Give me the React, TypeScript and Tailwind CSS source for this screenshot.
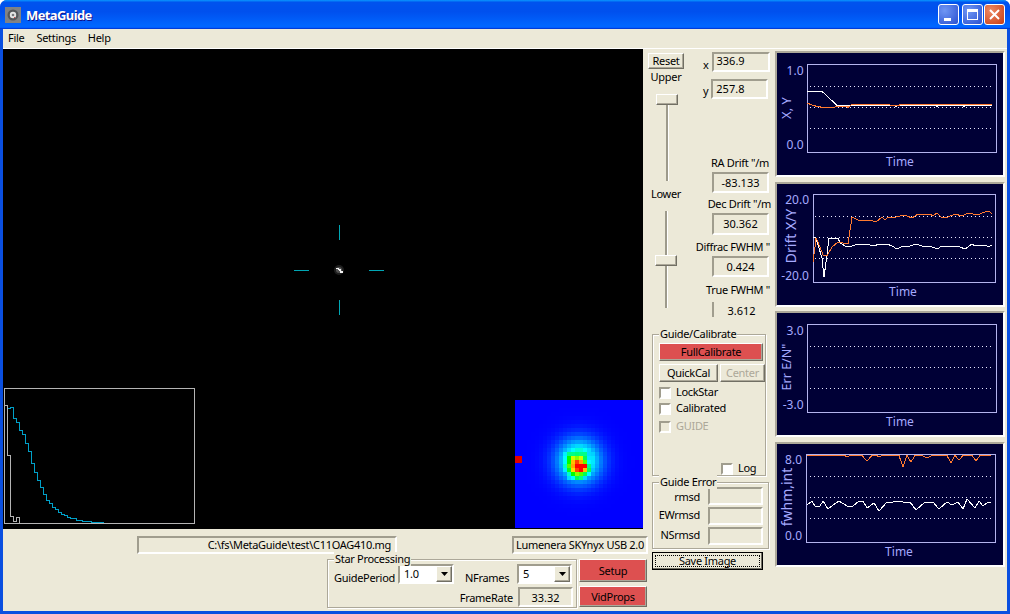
import type { ReactNode } from 'react';

const raised = 'border border-t-white border-l-white border-r-[#716f64] border-b-[#716f64] shadow-[inset_-1px_-1px_0_#aca899]';
const sunken = 'border-2 border-t-[#a09d8e] border-l-[#a09d8e] border-r-white border-b-white';
const etched = 'relative border border-[#aca899] shadow-[1px_1px_0_#fff,inset_1px_1px_0_#fff]';

// points are in window pixels, each svg gets a viewBox in the same coordinates
const charts = [
  {
    top: 'mt-[2px]',
    h: 122,
    y0: 53,
    plot: [807.5, 64.5, 189, 88],
    dots: [86.5, 107.5, 128.5],
    dotX: 810,
    yLabel: 'X, Y',
    yLabelSize: 13,
    yLabelX: 791,
    yLabelY: 108,
    max: '1.0',
    min: '0.0',
    tickX: 803.5,
    maxY: 75,
    minY: 149,
    timeX: 900,
    timeY: 166,
    white: '807,91.5 822,91.5 825,94 837,105.5 850,105.5 895,105.5 896,106.5 897,105.5 936,105.5 937,106.5 938,105.5 963,105.5 964,106.5 965,105.5 992,105.5',
    orange: '807,103 813,105.5 823,107.5 833,107.5 837,106.5 847,106 848,107.5 851,105 853,104.5 880,105 881,104.5 890,105 899,105.5 900,104.5 992,104.5',
  },
  {
    top: 'mt-[5px]',
    h: 121,
    y0: 184,
    plot: [813.5, 194.5, 182, 88],
    dots: [216.5, 237.5, 258.5],
    dotX: 815,
    yLabel: 'Drift X/Y',
    yLabelSize: 14,
    yLabelX: 796,
    yLabelY: 236,
    max: '20.0',
    min: '-20.0',
    tickX: 809,
    maxY: 204,
    minY: 280,
    timeX: 903,
    timeY: 296,
    white: '813,237 816,238 818,245 822,258 824,277 827,255 829,238 838,238 840,243 847,247 852,246 858,244 867,244 873,246 880,244 887,244 892,246 897,249 903,246 910,246 916,244 922,246 930,246 937,249 942,246 947,247 953,246 960,247 965,249 972,244 975,246 980,245 987,246 988,247 992,245',
    orange: '813,262 815,247 816,238 818,242 823,255 827,256 832,247 838,242 848,244 852,217 858,220 870,220 876,222 882,217 885,220 888,217 893,218 903,215 907,216 912,218 918,214 930,214 933,216 937,213 941,217 948,217 955,214 962,216 968,213 973,214 980,214 987,211 990,212 992,214',
  },
  {
    top: 'mt-[4px]',
    h: 122,
    y0: 313,
    plot: [807.5, 324.5, 189, 88],
    dots: [346.5, 367.5, 388.5],
    dotX: 810,
    yLabel: 'Err E/N"',
    yLabelSize: 12.5,
    yLabelX: 791,
    yLabelY: 367,
    max: '3.0',
    min: '-3.0',
    tickX: 803.5,
    maxY: 335,
    minY: 409,
    timeX: 900,
    timeY: 426,
    white: '',
    orange: '',
  },
  {
    top: 'mt-[5px]',
    h: 121,
    y0: 444,
    plot: [806.5, 454.5, 189, 88],
    dots: [476.5, 497.5, 518.5],
    dotX: 810,
    yLabel: 'fwhm,int',
    yLabelSize: 14,
    yLabelX: 792,
    yLabelY: 497,
    max: '8.0',
    min: '0.0',
    tickX: 802,
    maxY: 464,
    minY: 540,
    timeX: 899,
    timeY: 556,
    white: '807,505 812,501 815,506 820,506 823,501 828,509 833,505 839,501 847,506 853,506 859,501 863,501 867,508 874,503 879,511 887,502 893,502 898,501 903,502 910,502 916,510 925,502 933,502 939,509 947,502 952,505 958,502 963,509 967,499 975,508 979,501 983,506 988,502 991,503',
    orange: '807,455.5 845,455.5 847,457 850,455.5 862,455.5 867,461 872,455.5 877,455.5 879,457 882,455.5 899,455.5 903,467 907,455.5 911,462 915,455.5 922,455.5 927,458 932,455.5 947,455.5 951,463 955,455.5 959,460 963,455.5 972,455.5 976,461 980,455.5 991,455.5',
  },
];

const grayHist = '4.5,405.5 7.5,405.5 7.5,455.5 10.5,455.5 10.5,516.5 13.5,516.5 13.5,521.5 16.5,521.5 16.5,517.5 19.5,517.5 19.5,523.5';
const cyanHist = '7.5,408.5 10.5,408.5 10.5,407.5 13.5,407.5 13.5,418.5 16.5,418.5 16.5,422.5 19.5,422.5 19.5,430.5 22.5,430.5 22.5,434.5 25.5,434.5 25.5,443.5 28.5,443.5 28.5,451.5 31.5,451.5 31.5,463.5 34.5,463.5 34.5,472.5 37.5,472.5 37.5,480.5 40.5,480.5 40.5,487.5 43.5,487.5 43.5,494.5 46.5,494.5 46.5,500.5 49.5,500.5 49.5,503.5 52.5,503.5 52.5,507.5 55.5,507.5 55.5,509.5 58.5,509.5 58.5,512.5 61.5,512.5 61.5,514.5 64.5,514.5 64.5,515.5 67.5,515.5 67.5,517.5 70.5,517.5 70.5,518.5 76.5,518.5 76.5,520.5 82.5,520.5 82.5,521.5 91.5,521.5 91.5,522.5 103.5,522.5';

const core: Record<string, number> = {
  '13,12': 0.33, '13,13': 0.42, '13,14': 0.42, '13,15': 0.43, '13,16': 0.42, '13,17': 0.42, '13,18': 0.3,
  '14,12': 0.35, '14,13': 0.5, '14,14': 0.62, '14,15': 0.58, '14,16': 0.62, '14,17': 0.45, '14,18': 0.32,
  '15,12': 0.35, '15,13': 0.5, '15,14': 0.7, '15,15': 0.8, '15,16': 0.72, '15,17': 0.55, '15,18': 0.35,
  '16,12': 0.38, '16,13': 0.55, '16,14': 0.72, '16,15': 0.95, '16,16': 0.95, '16,17': 0.85, '16,18': 0.42,
  '17,12': 0.33, '17,13': 0.48, '17,14': 0.68, '17,15': 0.8, '17,16': 0.95, '17,17': 0.7, '17,18': 0.45,
  '18,13': 0.38, '18,14': 0.5, '18,15': 0.58, '18,16': 0.55, '18,17': 0.45, '18,18': 0.35,
  '19,13': 0.3, '19,14': 0.35, '19,15': 0.45, '19,16': 0.42, '19,17': 0.3,
};

const jet = (v: number) => {
  if (v < 0.35) return 'rgb(0,' + Math.round((v / 0.35) * 255) + ',255)';
  if (v < 0.5) return 'rgb(0,255,' + Math.round(((0.5 - v) / 0.15) * 255) + ')';
  if (v < 0.65) return 'rgb(' + Math.round(((v - 0.5) / 0.15) * 255) + ',255,0)';
  if (v < 0.85) return 'rgb(255,' + Math.round(((0.85 - v) / 0.2) * 255) + ',0)';
  return 'rgb(255,0,0)';
};

const heat = Array.from({ length: 32 * 32 }, (_, i) => {
  const r = Math.floor(i / 32);
  const c = i % 32;
  const d2 = (c - 15.5) ** 2 + (r - 14.8) ** 2;
  const v = core[r + ',' + c] ?? 0.5 * Math.exp(-d2 / 28);
  return { r, c, fill: jet(v) };
});

function Button({ className, red, disabled, children }: { className: string; red?: boolean; disabled?: boolean; children: ReactNode }) {
  return (
    <button
      className={`${raised} ${className} ${red ? 'bg-[#dd5050]' : 'bg-[#ece9d8]'} ${disabled ? 'text-[#aca899]' : 'text-black'} flex shrink-0 items-center justify-center`}
    >
      {children}
    </button>
  );
}

function Field({ className, children }: { className: string; children?: ReactNode }) {
  return <div className={`${sunken} ${className} flex shrink-0 items-center overflow-hidden whitespace-nowrap`}>{children}</div>;
}

function Check({ label, className, disabled }: { label: string; className: string; disabled?: boolean }) {
  return (
    <div className={`flex items-center gap-[5px] ${className} ${disabled ? 'text-[#aca899]' : ''}`}>
      <div className={`h-[12px] w-[12px] ${sunken} ${disabled ? 'bg-[#ece9d8]' : 'bg-white'}`} />
      <span className="-translate-y-px">{label}</span>
    </div>
  );
}

function Group({ label, className, children }: { label: string; className: string; children: ReactNode }) {
  return (
    <div className={`${etched} ${className}`}>
      <span className="absolute left-[6px] top-[-8px] bg-[#ece9d8] px-px leading-[14px]">{label}</span>
      {children}
    </div>
  );
}

function Slider({ className, thumb, thumbX, h }: { className: string; thumb: string; thumbX: string; h: string }) {
  return (
    <div className={`relative ${h} ${className}`}>
      <div className="mx-auto h-full w-[3px] border-l-2 border-[#9d9a8b] border-r border-r-white" />
      <div className={`absolute h-[11px] w-[22px] bg-[#ece9d8] ${raised} ${thumb} ${thumbX}`} />
    </div>
  );
}

function Combo({ value, className }: { value: string; className: string }) {
  return (
    <div className={`${sunken} ${className} flex h-[20px] shrink-0 items-center justify-between bg-white pl-[4px]`}>
      <span className="-translate-y-px">{value}</span>
      <div className={`flex h-[16px] w-[16px] items-center justify-center bg-[#ece9d8] ${raised}`}>
        <svg width="7" height="4" viewBox="0 0 7 4">
          <path d="M0 0h7L3.5 4z" fill="#000" />
        </svg>
      </div>
    </div>
  );
}

function Chart({ c }: { c: (typeof charts)[number] }) {
  return (
    <div className={`${c.top} w-[230px] border-2 border-t-[#aca899] border-l-[#aca899] border-r-white border-b-white`}>
      <svg
        width={226}
        height={c.h}
        viewBox={`777 ${c.y0} 226 ${c.h}`}
        className="block bg-[#000036] font-['Noto_Sans',sans-serif] text-[12px] tracking-normal"
      >
        <rect x={c.plot[0]} y={c.plot[1]} width={c.plot[2]} height={c.plot[3]} fill="none" stroke="#b4b4ee" shapeRendering="crispEdges" />
        {c.dots.map((y) => (
          <line key={y} x1={c.dotX} x2={992} y1={y} y2={y} stroke="#e8e8ff" strokeDasharray="1 3" shapeRendering="crispEdges" />
        ))}
        <polyline points={c.white} fill="none" stroke="#fff" shapeRendering="crispEdges" />
        <polyline points={c.orange} fill="none" stroke="#ff7a30" shapeRendering="crispEdges" />
        <g fill="#a6aaff">
          <text x={c.tickX} y={c.maxY} textAnchor="end">{c.max}</text>
          <text x={c.tickX} y={c.minY} textAnchor="end">{c.min}</text>
          <text x={c.timeX} y={c.timeY} textAnchor="middle">Time</text>
          <text x={c.yLabelX} y={c.yLabelY} fontSize={c.yLabelSize} textAnchor="middle" transform={`rotate(-90 ${c.yLabelX} ${c.yLabelY})`}>{c.yLabel}</text>
        </g>
      </svg>
    </div>
  );
}

function CaptionButton({ className, children }: { className: string; children: ReactNode }) {
  return <div className={`flex h-[21px] w-[21px] items-center justify-center rounded-[3px] border border-white ${className}`}>{children}</div>;
}

export default function App() {
  return (
    <div className="flex h-[614px] w-[1010px] flex-col overflow-hidden rounded-t-[7px] bg-[#0a4fe0] font-['Noto_Sans','Liberation_Sans',sans-serif] text-[11px] leading-[13px] tracking-[-0.3px] text-black">
      {/* Title bar */}
      <div className="flex h-[29px] shrink-0 items-center bg-[linear-gradient(180deg,#0997ff,#0053ee_8%,#0050ee_40%,#0066ff_88%,#0066ff_93%,#005bff_95%,#003dd7_96%,#003dd7)] pl-[5px] pr-[5px]">
        <svg width="16" height="16" viewBox="0 0 16 16" className="block">
          <rect width="16" height="16" fill="#808285" />
          <circle cx="8" cy="8" r="5.5" fill="#55575a" />
          <circle cx="8" cy="8" r="3.2" fill="#e4e4e4" />
          <circle cx="8" cy="8" r="1.3" fill="#77797c" />
          <rect x="9" y="10" width="1" height="1" fill="#e04040" />
        </svg>
        <span className="ml-[5px] mt-[1px] text-[13px] font-bold tracking-[-0.6px] text-white [text-shadow:1px_1px_0_#0f1089]">MetaGuide</span>
        <div className="ml-auto flex gap-[3px]">
          <CaptionButton className="bg-[radial-gradient(circle_at_30%_30%,#6f96f4,#2a50d0)]">
            <div className="mr-[3px] mt-[9px] h-[3px] w-[7px] bg-white" />
          </CaptionButton>
          <CaptionButton className="bg-[radial-gradient(circle_at_30%_30%,#6f96f4,#2a50d0)]">
            <div className="h-[11px] w-[11px] border border-t-[3px] border-white" />
          </CaptionButton>
          <CaptionButton className="-ml-[2px] bg-[radial-gradient(circle_at_30%_30%,#ee8a64,#c83c14)]">
            <svg width="11" height="11" viewBox="0 0 11 11">
              <path d="M1 1l9 9M10 1l-9 9" stroke="#fff" strokeWidth="2" />
            </svg>
          </CaptionButton>
        </div>
      </div>

      <div className="mx-[3px] flex h-[582px] flex-col bg-[#ece9d8]">
        {/* Menu */}
        <div className="flex h-[20px] shrink-0 items-center gap-3 border-b border-white pb-[2px] pl-[5px]">
          <span>File</span>
          <span>Settings</span>
          <span>Help</span>
        </div>

        <div className="flex">
          {/* Video and status */}
          <div className="w-[645px] shrink-0">
            <svg width={640} height={480} viewBox="3 49 640 480" className="block bg-black">
              <g stroke="#00a6b4" shapeRendering="crispEdges">
                <path d="M339.5 225v15M339.5 300v15M294 270.5h15M369 270.5h15" />
              </g>
              <circle cx="339" cy="270" r="5" fill="#555" opacity="0.35" />
              <circle cx="339" cy="270" r="3" fill="#888" opacity="0.5" />
              <path d="M336 268h3v1h-3zM338 269h3v1h-3zM339 270h2v1h-2zM340 271h3v2h-3z" fill="#f0f0f0" />
              <rect x="4.5" y="388.5" width="190" height="135" fill="none" stroke="#b4b4b4" shapeRendering="crispEdges" />
              <polyline points={grayHist} fill="none" stroke="#b4b4b4" shapeRendering="crispEdges" />
              <polyline points={cyanHist} fill="none" stroke="#00a0c8" shapeRendering="crispEdges" />
              <g transform="translate(515 400)" shapeRendering="crispEdges">
                {heat.map((p) => (
                  <rect key={p.r * 32 + p.c} x={p.c * 4} y={p.r * 4} width={4} height={4} fill={p.fill} />
                ))}
                <rect x="0" y="56" width="7" height="7" fill="#e00000" />
              </g>
            </svg>

            <div className="flex pt-[7px]">
              <Field className="ml-[134px] h-[18px] w-[260px] justify-end pb-[2px] pr-[4px]">C:\fs\MetaGuide\test\C11OAG410.mg</Field>
              <Field className="ml-[115px] h-[18px] w-[136px] pb-[2px] pl-[2px]">Lumenera SKYnyx USB 2.0 (</Field>
            </div>

            <div className="mt-[5px] flex">
              <Group label="Star Processing" className="ml-[324px] h-[49px] w-[250px] shrink-0 pl-[6px] pt-[4px]">
                <div className="flex items-center">
                  <span className="mt-[6px] w-[64px]">GuidePeriod</span>
                  <Combo value="1.0" className="w-[56px]" />
                  <span className="ml-[11px] mt-[6px] w-[52px]">NFrames</span>
                  <Combo value="5" className="w-[55px]" />
                </div>
                <div className="mt-[3px] flex items-center justify-end pr-[3px]">
                  <span className="mr-[5px]">FrameRate</span>
                  <Field className="h-[20px] w-[55px] justify-center tracking-normal">33.32</Field>
                </div>
              </Group>
              <div className="ml-[2px] flex flex-col gap-[4px]">
                <Button red className="h-[23px] w-[68px]">Setup</Button>
                <Button red className="h-[21px] w-[68px]">VidProps</Button>
              </div>
            </div>
          </div>

          {/* Controls */}
          <div className="w-[125px] shrink-0">
            <div className="flex h-[285px]">
              <div className="w-[52px] shrink-0">
                <Button className="mt-[4px] h-[16px] w-[36px] pb-[2px]">Reset</Button>
                <div className="mt-[2px] w-[36px] -translate-y-px text-center">Upper</div>
                <Slider className="mt-[10px] w-[38px]" h="h-[87px]" thumb="top-0" thumbX="left-[8px]" />
                <div className="mt-[7px] w-[36px] -translate-y-px text-center">Lower</div>
                <Slider className="mt-[10px] w-[36px]" h="h-[97px]" thumb="top-[44px]" thumbX="left-[7px]" />
              </div>
              <div className="w-[73px] shrink-0">
                <div className="mt-[3px] flex items-end gap-[3px] pl-[3px]">
                  <span className="pb-[1px]">x</span>
                  <Field className="h-[20px] w-[58px] pb-[4px] pl-[3px] tracking-normal">336.9</Field>
                </div>
                <div className="mt-[7px] flex items-end gap-[3px] pl-[3px]">
                  <span className="pb-[2px]">y</span>
                  <Field className="h-[20px] w-[57px] pb-[2px] pl-[3px] tracking-normal">257.8</Field>
                </div>
                <div className="mt-[58px] w-[69px] -translate-y-px whitespace-nowrap text-right">RA Drift "/m</div>
                <Field className="ml-[12px] mt-[2px] h-[21px] w-[57px] justify-center tracking-normal">-83.133</Field>
                <div className="mt-[5px] w-[71px] -translate-y-px whitespace-nowrap text-right">Dec Drift "/m</div>
                <Field className="ml-[12px] mt-[2px] h-[22px] w-[57px] justify-center pb-[2px] tracking-normal">30.362</Field>
                <div className="ml-[-20px] mt-[6px] w-[90px] -translate-y-px whitespace-nowrap text-right">Diffrac FWHM "</div>
                <Field className="ml-[12px] mt-[2px] h-[21px] w-[57px] justify-center tracking-normal">0.424</Field>
                <div className="mt-[7px] w-[70px] -translate-y-px whitespace-nowrap text-right">True FWHM "</div>
                <div className="ml-[12px] mt-[5px] flex h-[15px] w-[57px] items-center justify-center border-l-2 border-[#a09d8e] pt-[2px] tracking-normal">3.612</div>
              </div>
            </div>

            <Group label="Guide/Calibrate" className="ml-[4px] h-[142px] w-[114px] pl-[6px] pt-[8px]">
              <Button red className="h-[18px] w-[104px] pb-[2px]">FullCalibrate</Button>
              <div className="mt-[3px] flex gap-[2px]">
                <Button className="h-[18px] w-[59px] pb-[2px]">QuickCal</Button>
                <Button disabled className="h-[18px] w-[45px] pb-[2px]">Center</Button>
              </div>
              <Check label="LockStar" className="mt-[4px]" />
              <Check label="Calibrated" className="mt-[3px]" />
              <Check label="GUIDE" className="mt-[5px]" disabled />
              <Check label="Log" className="ml-[62px] mt-[29px]" />
            </Group>

            <Group label="Guide Error" className="ml-[4px] mt-[6px] flex h-[67px] w-[117px] flex-col gap-[2px] pr-[5px] pt-[4px]">
              {[
                { l: 'rmsd', shift: '' },
                { l: 'EWrmsd', shift: '-translate-y-[2px]' },
                { l: 'NSrmsd', shift: '-translate-y-[2px]' },
              ].map(({ l, shift }) => (
                <div key={l} className="flex items-center justify-end gap-[8px]">
                  <span className={shift}>{l}</span>
                  <Field className="h-[18px] w-[55px]" />
                </div>
              ))}
            </Group>

            <button className="ml-[4px] mt-[3px] flex h-[18px] w-[111px] items-center justify-center border border-black p-[2px] shadow-[inset_-1px_-1px_0_#716f64]">
              <span className="flex h-full w-full items-center justify-center border border-dotted border-black pb-[2px]">Save Image</span>
            </button>
          </div>

          {/* Charts */}
          <div className="ml-[2px] flex flex-col">
            {charts.map((c) => (
              <Chart key={c.yLabel} c={c} />
            ))}
          </div>
        </div>
      </div>
    </div>
  );
}
